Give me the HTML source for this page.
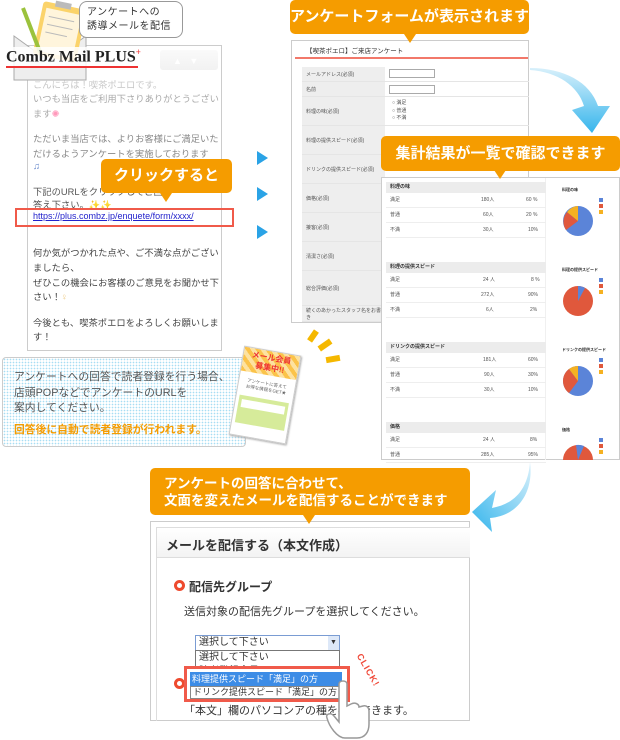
<!DOCTYPE html>
<html><head><meta charset="utf-8"><style>
*{margin:0;padding:0;box-sizing:border-box}
body{width:620px;height:740px;background:#fff;position:relative;overflow:hidden;font-family:"Liberation Sans","Noto Sans CJK JP",sans-serif;color:#333}
.a{position:absolute}
.ob{position:absolute;background:#f59c00;color:#fff;font-weight:bold;border-radius:5px;text-align:center}
.tail{position:absolute;width:0;height:0;border-left:6px solid transparent;border-right:6px solid transparent;border-top:9px solid #f59c00}
.m{position:absolute;left:33px;font-size:9.3px;line-height:14px;color:#444;white-space:nowrap}
.row{position:absolute;left:302px;width:227px;border-bottom:1px solid #e5e5e5;font-size:5px;color:#555}
.row .l{position:absolute;left:0;top:0;bottom:0;width:83px;background:#eee;padding-left:4px;display:flex;align-items:center}
.sec{position:absolute;left:386px;width:160px;font-size:5px;color:#555}
.sec .h{background:#ececec;height:11px;padding-left:4px;line-height:11px;font-weight:bold;color:#333}
.sec .r{height:15px;line-height:15px;border-bottom:1px solid #eee;position:relative;padding-left:4px}
.sec .r span{position:absolute}
.tri{position:absolute;width:0;height:0;border-top:7px solid transparent;border-bottom:7px solid transparent;border-left:11px solid #2aa3e6}
</style></head><body>

<!-- mail panel -->
<div class="a" style="left:27px;top:45px;width:195px;height:306px;border:1px solid #ccc;background:#fff"></div>
<div class="a" style="left:160px;top:50px;width:58px;height:20px;background:#e8e8e8;border-radius:3px"></div>
<div class="a" style="left:173px;top:56px;color:#fff;font-size:9px">▲&nbsp;&nbsp;&nbsp;▼</div>
<div class="m" style="top:78px;color:#bbb">こんにちは！喫茶ポエロです。</div>
<div class="m" style="top:92px;color:#aaa">いつも当店をご利用下さりありがとうござい</div>
<div class="m" style="top:107px;color:#aaa">ます<span style="color:#f9b">✺</span></div>
<div class="m" style="top:132px;color:#888">ただいま当店では、よりお客様にご満足いた</div>
<div class="m" style="top:147px;color:#888">だけるようアンケートを実施しております</div>
<div class="m" style="top:159px;color:#68c">♫</div>
<div class="m" style="top:185px;color:#555">下記のURLをクリックしてご回</div>
<div class="m" style="top:198px;color:#555">答え下さい。<span style="color:#fc4">✨✨</span></div>
<div class="m" style="top:210px;color:#22c;text-decoration:underline;font-size:9px;line-height:12px">https://plus.combz.jp/enquete/form/xxxx/</div>
<div class="m" style="top:246px">何か気がつかれた点や、ご不満な点がござい</div>
<div class="m" style="top:261px">ましたら、</div>
<div class="m" style="top:276px">ぜひこの機会にお客様のご意見をお聞かせ下</div>
<div class="m" style="top:290px">さい！<span style="color:#ec8">♀</span></div>
<div class="m" style="top:316px">今後とも、喫茶ポエロをよろしくお願いしま</div>
<div class="m" style="top:330px">す！</div>
<div class="a" style="left:28px;top:46px;width:192px;height:50px;background:linear-gradient(rgba(255,255,255,.85),rgba(255,255,255,0))"></div>
<div class="a" style="left:15px;top:208px;width:219px;height:19px;border:2px solid #f05a4a"></div>
<div class="ob" style="left:101px;top:159px;width:131px;height:34px;font-size:15px;line-height:34px">クリックすると</div>
<div class="tail" style="left:160px;top:193px"></div>

<!-- logo -->
<svg class="a" style="left:10px;top:0" width="80" height="82" viewBox="0 0 80 82">
<path d="M4 36 L40 62 L76 36 L76 80 L4 80 Z" fill="#eee" stroke="#aaa"/>
<g transform="rotate(12 45 30)"><rect x="28" y="4" width="44" height="54" fill="#fbd36a" rx="3"/><rect x="32" y="10" width="36" height="44" fill="#fff5dc"/><line x1="36" y1="18" x2="62" y2="18" stroke="#bbb"/><line x1="36" y1="26" x2="62" y2="26" stroke="#bbb"/><line x1="36" y1="34" x2="58" y2="34" stroke="#bbb"/><rect x="40" y="1" width="16" height="6" fill="#bbb"/></g>
<line x1="13" y1="8" x2="30" y2="52" stroke="#9bc23c" stroke-width="4"/>
</svg>
<div class="a" style="left:4px;top:47px;font-family:'Liberation Serif',serif;font-weight:bold;font-size:16px;color:#222;background:rgba(255,255,255,.85);padding:0 2px;white-space:nowrap">Combz Mail PLUS<sup style="color:#e33;font-size:9px">+</sup></div>
<div class="a" style="left:6px;top:66px;width:132px;height:2px;background:#e33"></div>
<div class="a" style="left:79px;top:1px;width:104px;height:37px;border:1.5px solid #999;border-radius:8px;background:#fff;font-size:10px;line-height:14px;padding:4px 7px;color:#333;white-space:nowrap;letter-spacing:.5px">アンケートへの<br>誘導メールを配信</div>

<!-- blue triangles -->
<div class="tri" style="left:257px;top:151px"></div>
<div class="tri" style="left:257px;top:187px"></div>
<div class="tri" style="left:257px;top:225px"></div>

<!-- form panel -->
<div class="a" style="left:291px;top:40px;width:238px;height:283px;border:1px solid #ccc;background:#fff"></div>
<div class="a" style="left:306px;top:45px;font-size:6.5px;color:#333">【喫茶ポエロ】ご来店アンケート</div>
<div class="a" style="left:295px;top:57px;width:233px;height:2px;background:#f2786a"></div>
<div class="row" style="top:67px;height:15px"><div class="l">メールアドレス(必須)</div><div class="a" style="left:87px;top:2px;width:46px;height:9px;border:1px solid #aaa"></div></div>
<div class="row" style="top:82px;height:15px"><div class="l">名前</div><div class="a" style="left:87px;top:3px;width:46px;height:9px;border:1px solid #aaa"></div></div>
<div class="row" style="top:97px;height:29px"><div class="l">料理の味(必須)</div><div class="a" style="left:90px;top:3px;line-height:7.5px">○ 満足<br>○ 普通<br>○ 不満</div></div>
<div class="row" style="top:126px;height:29px"><div class="l">料理の提供スピード(必須)</div></div>
<div class="row" style="top:155px;height:29px"><div class="l">ドリンクの提供スピード(必須)</div></div>
<div class="row" style="top:184px;height:29px"><div class="l">価格(必須)</div></div>
<div class="row" style="top:213px;height:29px"><div class="l">接客(必須)</div></div>
<div class="row" style="top:242px;height:29px"><div class="l">清潔さ(必須)</div></div>
<div class="row" style="top:271px;height:35px"><div class="l">総合評価(必須)</div></div>
<div class="row" style="top:306px;height:16px"><div class="l">続くのあかったスタッフ名をお書き</div></div>
<div class="ob" style="left:290px;top:0;width:239px;height:34px;font-size:15px;line-height:34px">アンケートフォームが表示されます</div>
<div class="tail" style="left:404px;top:34px"></div>

<!-- blue arrow 1 -->
<svg class="a" style="left:528px;top:66px" width="90" height="70" viewBox="0 0 90 70">
<defs><linearGradient id="g1" x1="0" y1="0" x2="0" y2="1"><stop offset="0" stop-color="#d8f0fb"/><stop offset="1" stop-color="#35b5ec"/></linearGradient></defs>
<path d="M2 4 C30 6 50 20 56 40 L44 44 L64 67 L82 40 L70 40 C62 16 36 2 2 2 Z" fill="url(#g1)"/>
</svg>

<!-- results panel -->
<div class="a" style="left:381px;top:177px;width:239px;height:283px;border:1px solid #ccc;background:#fff"></div>
<div class="a" style="left:545px;top:178px;width:1px;height:282px;background:#f0f0f0"></div>
<div class="sec" style="top:182px"><div class="h">料理の味</div><div class="r">満足<span style="left:95px">180人</span><span style="left:140px">60 %</span></div><div class="r">普通<span style="left:97px">60人</span><span style="left:140px">20 %</span></div><div class="r">不満<span style="left:97px">30人</span><span style="left:142px">10%</span></div></div>
<div class="sec" style="top:262px"><div class="h">料理の提供スピード</div><div class="r">満足<span style="left:97px">24 人</span><span style="left:145px">8 %</span></div><div class="r">普通<span style="left:95px">272人</span><span style="left:142px">90%</span></div><div class="r">不満<span style="left:100px">6人</span><span style="left:144px">2%</span></div></div>
<div class="sec" style="top:342px"><div class="h">ドリンクの提供スピード</div><div class="r">満足<span style="left:97px">181人</span><span style="left:142px">60%</span></div><div class="r">普通<span style="left:98px">90人</span><span style="left:142px">30%</span></div><div class="r">不満<span style="left:98px">30人</span><span style="left:142px">10%</span></div></div>
<div class="sec" style="top:422px"><div class="h">価格</div><div class="r">満足<span style="left:97px">24 人</span><span style="left:144px">8%</span></div><div class="r">普通<span style="left:95px">285人</span><span style="left:142px">95%</span></div></div>
<svg class="a" style="left:548px;top:178px" width="72" height="282" viewBox="0 0 72 282">
<g font-size="4" fill="#333" font-weight="bold"><text x="14" y="13">料理の味</text><text x="14" y="93">料理の提供スピード</text><text x="14" y="173">ドリンクの提供スピード</text><text x="14" y="253">価格</text></g>
<g id="lg"><rect x="51" y="20" width="4" height="4" fill="#5b84d8"/><rect x="51" y="26" width="4" height="4" fill="#e0583c"/><rect x="51" y="32" width="4" height="4" fill="#f5b121"/></g>
<use href="#lg" y="80"/><use href="#lg" y="160"/><use href="#lg" y="240"/>
<circle cx="30" cy="43" r="15" fill="#5b84d8"/><path d="M30 43 L18 52 A15 15 0 0 1 19 34 Z" fill="#e0583c"/><path d="M30 43 L19 34 A15 15 0 0 1 30 28 Z" fill="#f5b121"/>
<circle cx="30" cy="123" r="15" fill="#e0583c"/><path d="M30 123 L30 108 A15 15 0 0 1 37 110 Z" fill="#5b84d8"/>
<circle cx="30" cy="203" r="15" fill="#5b84d8"/><path d="M30 203 L21 215 A15 15 0 0 1 21 191 Z" fill="#e0583c"/><path d="M30 203 L21 191 A15 15 0 0 1 30 188 Z" fill="#f5b121"/>
<path d="M15 282 A15 15 0 0 1 45 282 Z" fill="#e0583c"/><path d="M30 282 L28 267 A15 15 0 0 1 36 268 Z" fill="#5b84d8"/>
</svg>
<div class="ob" style="left:381px;top:136px;width:239px;height:35px;font-size:15px;line-height:35px">集計結果が一覧で確認できます</div>
<div class="tail" style="left:494px;top:170px"></div>

<!-- bottom left dotted box -->
<div class="a" style="left:2px;top:357px;width:244px;height:90px;border:1px solid #ccc;border-radius:4px;background-image:radial-gradient(#a8ddf3 0.7px,transparent 0.9px);background-size:3px 3px"></div>
<div class="a" style="left:14px;top:370px;font-size:10.8px;line-height:15.5px;color:#555;white-space:nowrap">アンケートへの回答で読者登録を行う場合、<br>店頭POPなどでアンケートのURLを<br>案内してください。</div>
<div class="a" style="left:14px;top:421px;font-size:10.8px;color:#f59c00;font-weight:bold;white-space:nowrap">回答後に自動で読者登録が行われます。</div>
<div class="a" style="left:236px;top:350px;width:58px;height:90px;transform:rotate(10deg);background:#fff;border:1px solid #ccc;box-shadow:1px 1px 2px #aaa">
 <div style="height:24px;background:repeating-linear-gradient(45deg,#fbc34a 0 4px,#fde2a0 4px 8px);color:#e33;font-size:8px;font-weight:bold;text-align:center;line-height:10px;padding-top:2px">メール会員<br>募集中!!</div>
 <div style="font-size:4.5px;color:#666;text-align:center;margin-top:6px">アンケートに答えて<br>お得な情報をGET★</div>
 <div style="margin:6px 3px 0;height:28px;background:#d6eb9a"><div style="margin:0 3px;position:relative;top:4px;height:8px;background:#fff"></div></div>
</div>
<svg class="a" style="left:300px;top:328px" width="45" height="40"><g fill="#f5b800"><rect x="10" y="2" width="6" height="12" transform="rotate(35 13 8)"/><rect x="22" y="10" width="6" height="14" transform="rotate(55 25 17)"/><rect x="26" y="28" width="14" height="6" transform="rotate(-10 33 31)"/></g></svg>

<!-- blue arrow 2 -->
<svg class="a" style="left:472px;top:460px" width="60" height="72" viewBox="0 0 60 72">
<defs><linearGradient id="g2" x1="1" y1="0" x2="0" y2="1"><stop offset="0" stop-color="#d8f0fb"/><stop offset="1" stop-color="#35b5ec"/></linearGradient></defs>
<path d="M58 2 C56 30 42 44 20 48 L24 30 L0 52 L20 72 L18 58 C46 56 62 32 58 2 Z" fill="url(#g2)"/>
</svg>

<!-- bottom panel -->
<div class="a" style="left:150px;top:521px;width:320px;height:200px;border:1px solid #ccc;background:#fff"></div>
<div class="a" style="left:156px;top:527px;width:314px;height:194px;border:1px solid #ddd;border-right:none;border-bottom:none"></div>
<div class="a" style="left:157px;top:528px;width:313px;height:30px;background:linear-gradient(#fff,#f3f3f3);border-bottom:1px solid #ddd"></div>
<div class="a" style="left:166px;top:535px;font-size:13px;font-weight:bold;color:#333">メールを配信する（本文作成）</div>
<div class="a" style="left:174px;top:580px;width:11px;height:11px;border:3px solid #ee4a2e;border-radius:50%"></div>
<div class="a" style="left:189px;top:578px;font-size:12px;font-weight:bold;color:#333">配信先グループ</div>
<div class="a" style="left:184px;top:603px;font-size:11px;color:#333">送信対象の配信先グループを選択してください。</div>
<div class="a" style="left:174px;top:678px;width:11px;height:11px;border:3px solid #ee4a2e;border-radius:50%"></div>
<div class="a" style="left:184px;top:702px;font-size:11px;color:#333;white-space:nowrap">「本文」欄のパソコンアの種を確認できます。</div>
<div class="a" style="left:195px;top:635px;width:145px;height:16px;border:1px solid #7a9cd3;background:#fff;font-size:10px;line-height:14px;padding-left:3px">選択して下さい</div>
<div class="a" style="left:328px;top:636px;width:11px;height:14px;background:#dde8f8;font-size:7px;text-align:center;line-height:14px">▼</div>
<div class="a" style="left:195px;top:650px;width:145px;height:50px;border:1px solid #777;background:#fff;font-size:10px;line-height:14px;padding-left:3px;white-space:nowrap">選択して下さい<br><span style="color:#555">読者登録全員</span></div>
<div class="a" style="left:184px;top:666px;width:166px;height:36px;border:3px solid #f05a4a;background:#fff"></div>
<div class="a" style="left:190px;top:672px;width:152px;height:14px;background:#3c8ce6;color:#fff;font-size:9px;line-height:14px;padding-left:2px;white-space:nowrap;overflow:hidden">料理提供スピード「満足」の方</div>
<div class="a" style="left:190px;top:686px;width:152px;height:13px;border:1px solid #888;font-size:9px;line-height:11px;padding-left:2px;white-space:nowrap;overflow:hidden;background:#fff">ドリンク提供スピード「満足」の方</div>
<div class="a" style="left:350px;top:665px;color:#f04a3a;font-size:9px;font-weight:bold;transform:rotate(60deg);letter-spacing:1px">CLICK!</div>
<svg class="a" style="left:325px;top:680px" width="50" height="60" viewBox="0 0 50 60">
<path d="M14 4 C14 0 22 0 22 4 L22 26 L26 24 C30 22 34 24 34 27 L38 26 C42 25 44 28 44 31 L44 44 C44 52 40 58 32 58 L20 58 C12 58 4 46 2 38 C0 34 6 32 9 36 L14 42 Z" fill="#fff" stroke="#999" stroke-width="1.5"/>
</svg>
<div class="ob" style="left:150px;top:468px;width:320px;height:47px;font-size:13.5px;line-height:17px;text-align:left;padding:7px 0 0 14px;white-space:nowrap">アンケートの回答に合わせて、<br>文面を変えたメールを配信することができます</div>
<div class="tail" style="left:303px;top:515px"></div>
</body></html>
